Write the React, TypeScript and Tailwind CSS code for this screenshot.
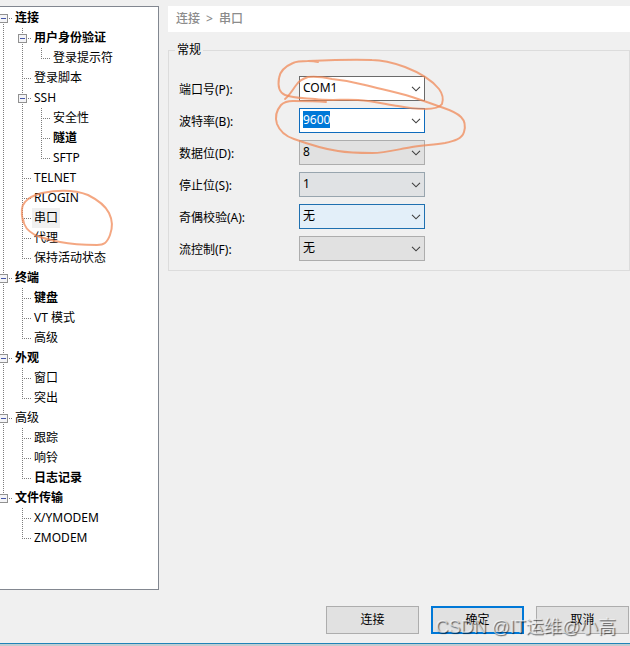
import React from 'react';

type Guide = 'none' | 'line' | 'tee' | 'end' | 'boxFirst' | 'box' | 'boxLast';

interface TreeRow {
  label: string;
  guides: Guide[];
  bold?: boolean;
  selected?: boolean;
}

const rows: TreeRow[] = [
  { label: '连接', guides: ['boxFirst'], bold: true },
  { label: '用户身份验证', guides: ['line', 'box'], bold: true },
  { label: '登录提示符', guides: ['line', 'line', 'end'] },
  { label: '登录脚本', guides: ['line', 'tee'] },
  { label: 'SSH', guides: ['line', 'box'] },
  { label: '安全性', guides: ['line', 'line', 'tee'] },
  { label: '隧道', guides: ['line', 'line', 'tee'], bold: true },
  { label: 'SFTP', guides: ['line', 'line', 'end'] },
  { label: 'TELNET', guides: ['line', 'tee'] },
  { label: 'RLOGIN', guides: ['line', 'tee'] },
  { label: '串口', guides: ['line', 'tee'], selected: true },
  { label: '代理', guides: ['line', 'tee'] },
  { label: '保持活动状态', guides: ['line', 'end'] },
  { label: '终端', guides: ['box'], bold: true },
  { label: '键盘', guides: ['line', 'tee'], bold: true },
  { label: 'VT 模式', guides: ['line', 'tee'] },
  { label: '高级', guides: ['line', 'end'] },
  { label: '外观', guides: ['box'], bold: true },
  { label: '窗口', guides: ['line', 'tee'] },
  { label: '突出', guides: ['line', 'end'] },
  { label: '高级', guides: ['box'] },
  { label: '跟踪', guides: ['line', 'tee'] },
  { label: '响铃', guides: ['line', 'tee'] },
  { label: '日志记录', guides: ['line', 'end'], bold: true },
  { label: '文件传输', guides: ['boxLast'], bold: true },
  { label: 'X/YMODEM', guides: ['none', 'tee'] },
  { label: 'ZMODEM', guides: ['none', 'end'] },
];

const GuideCell: React.FC<{ kind: Guide }> = ({ kind }) => {
  const isBox = kind.startsWith('box');
  const top = kind === 'boxFirst' ? 10 : 0;
  const bottom = kind === 'end' || kind === 'boxLast' ? 11 : 20;
  return (
    <svg className="h-5 w-[19px] shrink-0" viewBox="0 0 19 20" shapeRendering="crispEdges" aria-hidden="true">
      {kind !== 'none' && (
        <path d={`M9.5 ${top}V${bottom}`} stroke="#7d7d7d" strokeDasharray="1 1" />
      )}
      {kind !== 'none' && kind !== 'line' && (
        <path d="M9 10.5H18" stroke="#7d7d7d" strokeDasharray="1 1" />
      )}
      {isBox && (
        <>
          <rect x="5.5" y="6.5" width="8" height="8" fill="#f4f4f6" stroke="#919191" />
          <path d="M7 10.5H12" stroke="#4456a8" />
        </>
      )}
    </svg>
  );
};

const Tree = () => (
  <nav className="w-[159px] shrink-0 overflow-hidden border-y border-r border-[#828790] bg-white pt-px" aria-label="类别">
    <ul className="-ml-1.5">
      {rows.map((row, i) => (
        <li key={i} className="flex h-5 items-center">
          {row.guides.map((kind, j) => (
            <GuideCell key={j} kind={kind} />
          ))}
          <a
            href="#"
            className={`px-0.5 leading-5 whitespace-nowrap ${row.bold ? 'font-bold' : ''} ${row.selected ? 'bg-[#f0f0f0]' : ''}`}
          >
            {row.label}
          </a>
        </li>
      ))}
    </ul>
  </nav>
);

const Chevron = () => (
  <svg className="h-[6px] w-[10px]" viewBox="0 0 10 6" fill="none" stroke="#404040" strokeWidth="1.1" aria-hidden="true">
    <path d="M1 .8L5 4.8L9 .8" />
  </svg>
);

interface FieldProps {
  id: string;
  label: string;
  children: React.ReactNode;
}

const Field: React.FC<FieldProps> = ({ id, label, children }) => (
  <div className="flex h-8 items-start">
    <label htmlFor={id} className="w-[120px] pt-1 leading-5">{label}</label>
    {children}
  </div>
);

// Editable combo box: text input with a drop-down button
const Combo: React.FC<{ id: string; value: string; active?: boolean }> = ({ id, value, active }) => (
  <div className={`flex h-[25px] w-[126px] items-center justify-between border bg-white pr-[3px] pb-0.5 pl-[3px] ${active ? 'border-[#0f6cbd]' : 'border-[#6a6a6a]'}`}>
    <input
      id={id}
      defaultValue={value}
      className={`field-sizing-content h-[17px] leading-4 outline-none ${active ? 'bg-[#0078d7] text-white' : 'bg-white'}`}
    />
    <button type="button" aria-label="展开" className="flex pt-0.5">
      <Chevron />
    </button>
  </div>
);

const DropDown: React.FC<{ id: string; value: string; look: string }> = ({ id, value, look }) => (
  <div className="relative">
    <select id={id} defaultValue={value} className={`block h-[25px] w-[126px] appearance-none border pr-4 pb-px pl-[3px] leading-5 outline-none ${look}`}>
      <option>{value}</option>
    </select>
    <div className="pointer-events-none absolute inset-y-0 right-1 flex items-center">
      <Chevron />
    </div>
  </div>
);

// Hand-drawn marks around the serial port entries
const PenMarks = () => (
  <svg
    className="pointer-events-none absolute top-0 left-0 h-[300px] w-[500px]"
    viewBox="0 0 500 300"
    fill="none"
    stroke="#f08a58"
    strokeOpacity="0.75"
    strokeWidth="2"
    strokeLinecap="round"
    aria-hidden="true"
  >
    <path d="M23 222C21 213 21 206 25 202C29 197 34 195 42 193C58 190 75 190 88 195C98 200 106 207 109 213C113 221 113 227 110 235C107 243 104 245 97 245C82 245 70 244 60 242C49 240 42 238 35 235C28 231 24 227 23 219" />
    <path d="M318 62C314 61 311 61 308 61C301 61 297 61 293 63C286 66 280 71 279 78C278 84 278 92 285 95C292 98 303 98 315 99C330 101 344 99 358 100C373 101 385 104 398 106C408 108 417 109 425 109C435 109 440 107 442 104C444 98 442 93 439 89C431 79 418 72 405 67C394 63 383 60 372 60C355 59 330 60 308 61" />
    <path d="M326 102C315 101 304 101 293 101C287 101 284 102 281 105C276 111 275 118 277 124C280 132 288 137 294 139C308 144 323 149 338 151C350 153 361 153 372 153C386 153 399 149 412 147C424 145 434 145 445 143C454 141 462 139 464 132C466 125 465 121 461 117C455 111 446 109 438 106C430 103 421 100 412 97C396 92 380 89 365 85C354 82 343 80 332 79C323 77 315 76 308 77C302 79 299 81 297 84C293 89 290 95 285 99" />
  </svg>
);

const buttonBase = 'h-7 w-[93px] bg-[#e1e1e1] leading-5';

export default function App() {
  return (
    <div className="relative flex min-h-screen flex-col overflow-hidden bg-[#f0f0f0] pt-1.5 font-['Noto_Sans','Noto_Sans_CJK_SC',sans-serif] text-xs text-black">
      <div className="flex flex-1 gap-[9px]">
        <Tree />
        <main className="min-w-0 flex-1">
          <h1 className="flex h-[26px] gap-1.5 bg-white px-2 font-medium leading-[26px] text-[#8c8c8c]">
            <span>连接</span>
            <span>&gt;</span>
            <span>串口</span>
          </h1>
          <fieldset className="mt-2 border border-[#dcdcdc] px-2.5 pb-0.5">
            <legend className="-ml-1 px-0.5 leading-5">常规</legend>
            <div className="pt-4">
              <Field id="port" label="端口号(P):">
                <Combo id="port" value="COM1" />
              </Field>
              <Field id="baud" label="波特率(B):">
                <Combo id="baud" value="9600" active />
              </Field>
              <Field id="data" label="数据位(D):">
                <DropDown id="data" value="8" look="border-[#adadad] bg-[#e1e1e1]" />
              </Field>
              <Field id="stop" label="停止位(S):">
                <DropDown id="stop" value="1" look="border-[#98a5ae] bg-[#e0e2e4]" />
              </Field>
              <Field id="parity" label="奇偶校验(A):">
                <DropDown id="parity" value="无" look="border-[#1f70b0] bg-[#e3eff9]" />
              </Field>
              <Field id="flow" label="流控制(F):">
                <DropDown id="flow" value="无" look="border-[#adadad] bg-[#e1e1e1]" />
              </Field>
            </div>
          </fieldset>
        </main>
      </div>

      <footer className="relative flex justify-end gap-3 pt-4 pr-px pb-[9px]">
        <button type="button" className={`${buttonBase} border border-[#adadad]`}>连接</button>
        <button type="button" className={`${buttonBase} border-2 border-[#0078d7]`}>确定</button>
        <button type="button" className={`${buttonBase} border border-[#adadad]`}>取消</button>
        <div className="pointer-events-none absolute right-3.5 bottom-0 text-lg leading-8 whitespace-nowrap text-white/60 [text-shadow:1px_1px_1px_#00000099] font-['Liberation_Sans','Noto_Sans_CJK_SC',sans-serif]">
          CSDN @IT运维@小高
        </div>
      </footer>
      <div className="h-px bg-[#1f84b8]" />
      <div className="h-0.5 bg-[#c3cdd1]" />

      <PenMarks />
    </div>
  );
}
